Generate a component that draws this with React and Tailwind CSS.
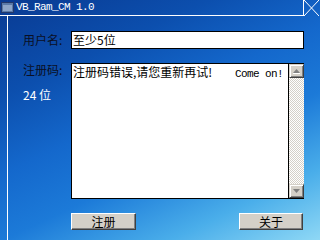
export default function App() {
  const cjk = "font-['SimSun','Noto_Sans_CJK_SC',sans-serif]";
  return (
    <div className="w-[320px] h-[240px] overflow-hidden flex flex-col bg-[linear-gradient(155deg,#093a92_0%,#0c4fae_25%,#1468cc_45%,#1c7ad8_62%,#4aaeea_82%,#8fd8f5_100%)]">
      {/* title bar */}
      <div className="flex h-[16px]">
        <div className="flex-1 flex items-center h-[16px] border-b border-white">
          <svg width="13" height="11" viewBox="0 0 13 11" className="ml-[1px]">
            <rect x="0.5" y="0.5" width="12" height="10" fill="#5a7aa8" stroke="#23386a" />
            <rect x="2" y="3" width="9" height="6" fill="#8ea6c8" />
          </svg>
          <span className="ml-[2px] text-white text-[11px] tracking-[-0.6px] leading-none font-['Liberation_Mono',monospace]">VB_Ram_CM 1.0</span>
        </div>
        <div className="w-[16px] h-[16px] border-l border-white">
          <svg width="15" height="16" viewBox="0 0 15 16">
            <line x1="0" y1="0" x2="15" y2="16" stroke="white" strokeWidth="1" />
            <line x1="15" y1="0" x2="0" y2="16" stroke="white" strokeWidth="1" />
          </svg>
        </div>
        <div className="w-[1px]" />
      </div>

      {/* body */}
      <div className="flex-1 flex">
        <div className="w-[7px]" />
        <div className="w-px bg-white" />
        <div className="flex-1 pl-[15px] pt-[15px] flex flex-col">
          {/* row 1 */}
          <div className="flex items-center h-[18px]">
            <div className={`w-[48px] text-[12px] leading-none text-[#0a0f24] ${cjk}`}>用户名:</div>
            <div className={`w-[233px] h-[18px] border border-black bg-white pl-[1px] flex items-center text-[12px] leading-none text-black ${cjk}`}>至少5位</div>
          </div>

          {/* row 2 */}
          <div className="flex mt-[14px]">
            <div className={`w-[48px] flex flex-col text-[12px] leading-[14px] ${cjk}`}>
              <div className="text-[#0a0f24]">注册码:</div>
              <div className="text-white mt-[11px]">24 位</div>
            </div>
            <div className="w-[233px] h-[136px] flex border-l border-t border-b border-black bg-white">
              <div className={`flex-1 pl-[1px] pt-[1px] text-[12px] leading-[14px] text-black ${cjk} whitespace-nowrap`}>
                <span className="inline-block w-[162px]">注册码错误,请您重新再试!</span>
                <span className="text-[11px] tracking-[-0.6px] font-['Liberation_Mono',monospace]">Come on!</span>
              </div>
              <div className="w-[16px] flex flex-col border-l border-black">
                <div className="h-[14px] bg-[#d4d0c8] border border-t-[#d4d0c8] border-l-[#d4d0c8] border-r-[#404040] border-b-[#404040] shadow-[inset_1px_1px_0_#fff,inset_-1px_-1px_0_#808080] flex items-center justify-center">
                  <svg width="7" height="5" viewBox="0 0 7 5">
                    <polygon points="3.5,0 7,4 0,4" fill="#808080" />
                    <line x1="0" y1="4.5" x2="7" y2="4.5" stroke="#fff" strokeWidth="1" />
                  </svg>
                </div>
                <div className="flex-1 bg-[repeating-conic-gradient(#d4d0c8_0_25%,#ffffff_0_50%)] bg-[length:2px_2px]" />
                <div className="h-[14px] bg-[#d4d0c8] border border-t-[#d4d0c8] border-l-[#d4d0c8] border-r-[#404040] border-b-[#404040] shadow-[inset_1px_1px_0_#fff,inset_-1px_-1px_0_#808080] flex items-center justify-center">
                  <svg width="7" height="5" viewBox="0 0 7 5">
                    <polygon points="0,0 7,0 3.5,4" fill="#808080" />
                  </svg>
                </div>
              </div>
            </div>
          </div>

          {/* row 3 buttons */}
          <div className="flex mt-[14px] ml-[48px] w-[232px] justify-between">
            <button className={`w-[65px] h-[17px] bg-[#d4d0c8] border border-t-white border-l-white border-r-[#404040] border-b-[#404040] shadow-[inset_-1px_-1px_0_#808080] text-[12px] leading-none text-black flex items-center justify-center ${cjk}`}>注册</button>
            <button className={`w-[64px] h-[17px] bg-[#d4d0c8] border border-t-white border-l-white border-r-[#404040] border-b-[#404040] shadow-[inset_-1px_-1px_0_#808080] text-[12px] leading-none text-black flex items-center justify-center ${cjk}`}>关于</button>
          </div>
        </div>
      </div>
    </div>
  );
}
